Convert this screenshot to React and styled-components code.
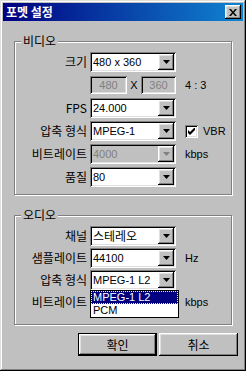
import React from 'react'
import styled, { createGlobalStyle } from 'styled-components'

const Global = createGlobalStyle`
  html, body { margin: 0; padding: 0; background: #c0c0c0; }
  body {
    font-family: "Liberation Sans", "Noto Sans CJK KR", sans-serif;
    font-size: 11px;
    color: #000;
  }
`

const raised = `
  box-shadow: inset -1px -1px #000, inset 1px 1px #fff,
    inset -2px -2px #808080, inset 2px 2px #dfdfdf;
`
const sunken = `
  box-shadow: inset 1px 1px #808080, inset -1px -1px #fff,
    inset 2px 2px #000, inset -2px -2px #dfdfdf;
`
const korean = `
  font-family: "Noto Sans CJK KR", sans-serif;
  font-size: 12px;
`

const Window = styled.div`
  width: 246px;
  height: 371px;
  box-sizing: border-box;
  padding: 3px;
  background: #c0c0c0;
  box-shadow: inset -1px -1px #000, inset 1px 1px #dfdfdf,
    inset -2px -2px #808080, inset 2px 2px #fff;
  display: flex;
  flex-direction: column;
`
const TitleBar = styled.div`
  height: 18px;
  background: linear-gradient(90deg, #000080, #1084d0);
  display: flex;
  align-items: center;
  justify-content: space-between;
  padding: 0 2px 0 3px;
  color: #fff;
  font-weight: bold;
  ${korean}
  line-height: 18px;
`
const CloseBtn = styled.div`
  width: 16px;
  height: 14px;
  background: #c0c0c0;
  ${raised}
  display: flex;
  align-items: center;
  justify-content: center;
`
const Body = styled.div`
  padding: 14px 11px 0 11px;
  display: flex;
  flex-direction: column;
`
const Group = styled.fieldset`
  margin: ${p => p.$top || 0}px 0 0 0;
  padding: ${p => p.$pt}px 0 ${p => p.$pb}px 0;
  border: 1px solid #808080;
  box-shadow: inset 1px 1px #fff, 1px 1px #fff;
  min-width: 0;
`
const Legend = styled.legend`
  margin-left: 6px;
  padding: 0 2px;
  background: #c0c0c0;
  line-height: 12px;
  ${korean}
`
const Form = styled.div`
  display: grid;
  grid-template-columns: 72px 86px auto;
  grid-auto-rows: 20px;
  column-gap: 3px;
  row-gap: ${p => p.$gap}px;
  align-items: center;
`
const Label = styled.div`
  text-align: right;
  white-space: nowrap;
  ${korean}
  line-height: 20px;
`
const Extra = styled.div`
  margin-left: 6px;
  display: flex;
  align-items: center;
  gap: 5px;
  white-space: nowrap;
`
const Combo = styled.div`
  position: relative;
  height: 20px;
  box-sizing: border-box;
  padding: 2px;
  background: ${p => (p.$disabled ? '#c0c0c0' : '#fff')};
  ${sunken}
  display: flex;
`
const ComboText = styled.div`
  flex: 1;
  padding-left: 1px;
  line-height: 16px;
  color: ${p => (p.$disabled ? '#808080' : '#000')};
  white-space: nowrap;
  overflow: hidden;
  ${p => (p.$ko ? korean : '')}
`
const ArrowBtn = styled.div`
  width: 16px;
  background: #c0c0c0;
  ${raised}
  display: flex;
  align-items: center;
  justify-content: center;
`
const List = styled.div`
  position: absolute;
  top: 100%;
  left: 0;
  width: 89px;
  box-sizing: border-box;
  border: 1px solid #000;
  background: #fff;
  z-index: 2;
`
const Item = styled.div`
  height: 13px;
  line-height: 13px;
  padding-left: 2px;
  box-sizing: border-box;
  background: ${p => (p.$sel ? '#000080' : '#fff')};
  color: ${p => (p.$sel ? '#fff' : '#000')};
  outline: ${p => (p.$sel ? '1px dotted #ffff80' : 'none')};
  outline-offset: -1px;
`
const SizeRow = styled.div`
  display: flex;
  align-items: center;
  justify-content: space-between;
`
const Edit = styled.div`
  width: ${p => p.$w}px;
  height: 18px;
  box-sizing: border-box;
  ${sunken}
  color: #808080;
  text-align: center;
  line-height: 18px;
`
const Check = styled.div`
  width: 13px;
  height: 13px;
  box-sizing: border-box;
  background: #fff;
  ${sunken}
  display: flex;
  align-items: center;
  justify-content: center;
`
const Buttons = styled.div`
  margin: 8px -6px 0 0;
  display: flex;
  justify-content: flex-end;
  gap: 2px;
`
const Button = styled.div`
  width: 79px;
  height: 23px;
  box-sizing: border-box;
  background: #c0c0c0;
  ${raised}
  ${p => (p.$default ? 'border: 1px solid #000;' : '')}
  display: flex;
  align-items: center;
  justify-content: center;
  ${korean}
`

const Arrow = ({ disabled }) => (
  <ArrowBtn>
    <svg width="7" height="4" viewBox="0 0 7 4">
      <path d="M0 0h7L3.5 4z" fill={disabled ? '#808080' : '#000'} />
    </svg>
  </ArrowBtn>
)

const Select = ({ value, disabled, ko, children }) => (
  <Combo $disabled={disabled}>
    <ComboText $disabled={disabled} $ko={ko}>{value}</ComboText>
    <Arrow disabled={disabled} />
    {children}
  </Combo>
)

const App = () => {
  return (
    <Window>
      <Global />
      <TitleBar>
        <span>포멧 설정</span>
        <CloseBtn>
          <svg width="8" height="7" viewBox="0 0 8 7">
            <path d="M0 0h2l2 2.5L6 0h2L5 3.5 8 7H6L4 4.5 2 7H0l3-3.5z" fill="#000" />
          </svg>
        </CloseBtn>
      </TitleBar>
      <Body>
        <Group $pt={5} $pb={7}>
          <Legend>비디오</Legend>
          <Form $gap={3}>
            <Label>크기</Label>
            <Select value="480 x 360" />
            <div />
            <div />
            <SizeRow>
              <Edit $w={37}>480</Edit>
              <span>X</span>
              <Edit $w={35}>360</Edit>
            </SizeRow>
            <Extra>4 : 3</Extra>
            <Label>FPS</Label>
            <Select value="24.000" />
            <div />
            <Label>압축 형식</Label>
            <Select value="MPEG-1" />
            <Extra>
              <Check>
                <svg width="7" height="7" viewBox="0 0 7 7">
                  <path d="M0 2v3l2 2 5-5V-1L2 4z" fill="#000" />
                </svg>
              </Check>
              VBR
            </Extra>
            <Label>비트레이트</Label>
            <Select value="4000" disabled />
            <Extra>kbps</Extra>
            <Label>품질</Label>
            <Select value="80" />
            <div />
          </Form>
        </Group>
        <Group $top={14} $pt={5} $pb={12}>
          <Legend>오디오</Legend>
          <Form $gap={2}>
            <Label>채널</Label>
            <Select value="스테레오" ko />
            <div />
            <Label>샘플레이트</Label>
            <Select value="44100" />
            <Extra>Hz</Extra>
            <Label>압축 형식</Label>
            <Select value="MPEG-1 L2">
              <List>
                <Item $sel>MPEG-1 L2</Item>
                <Item>PCM</Item>
              </List>
            </Select>
            <div />
            <Label>비트레이트</Label>
            <Select value="" />
            <Extra>kbps</Extra>
          </Form>
        </Group>
        <Buttons>
          <Button $default>확인</Button>
          <Button>취소</Button>
        </Buttons>
      </Body>
    </Window>
  )
}

export default App
